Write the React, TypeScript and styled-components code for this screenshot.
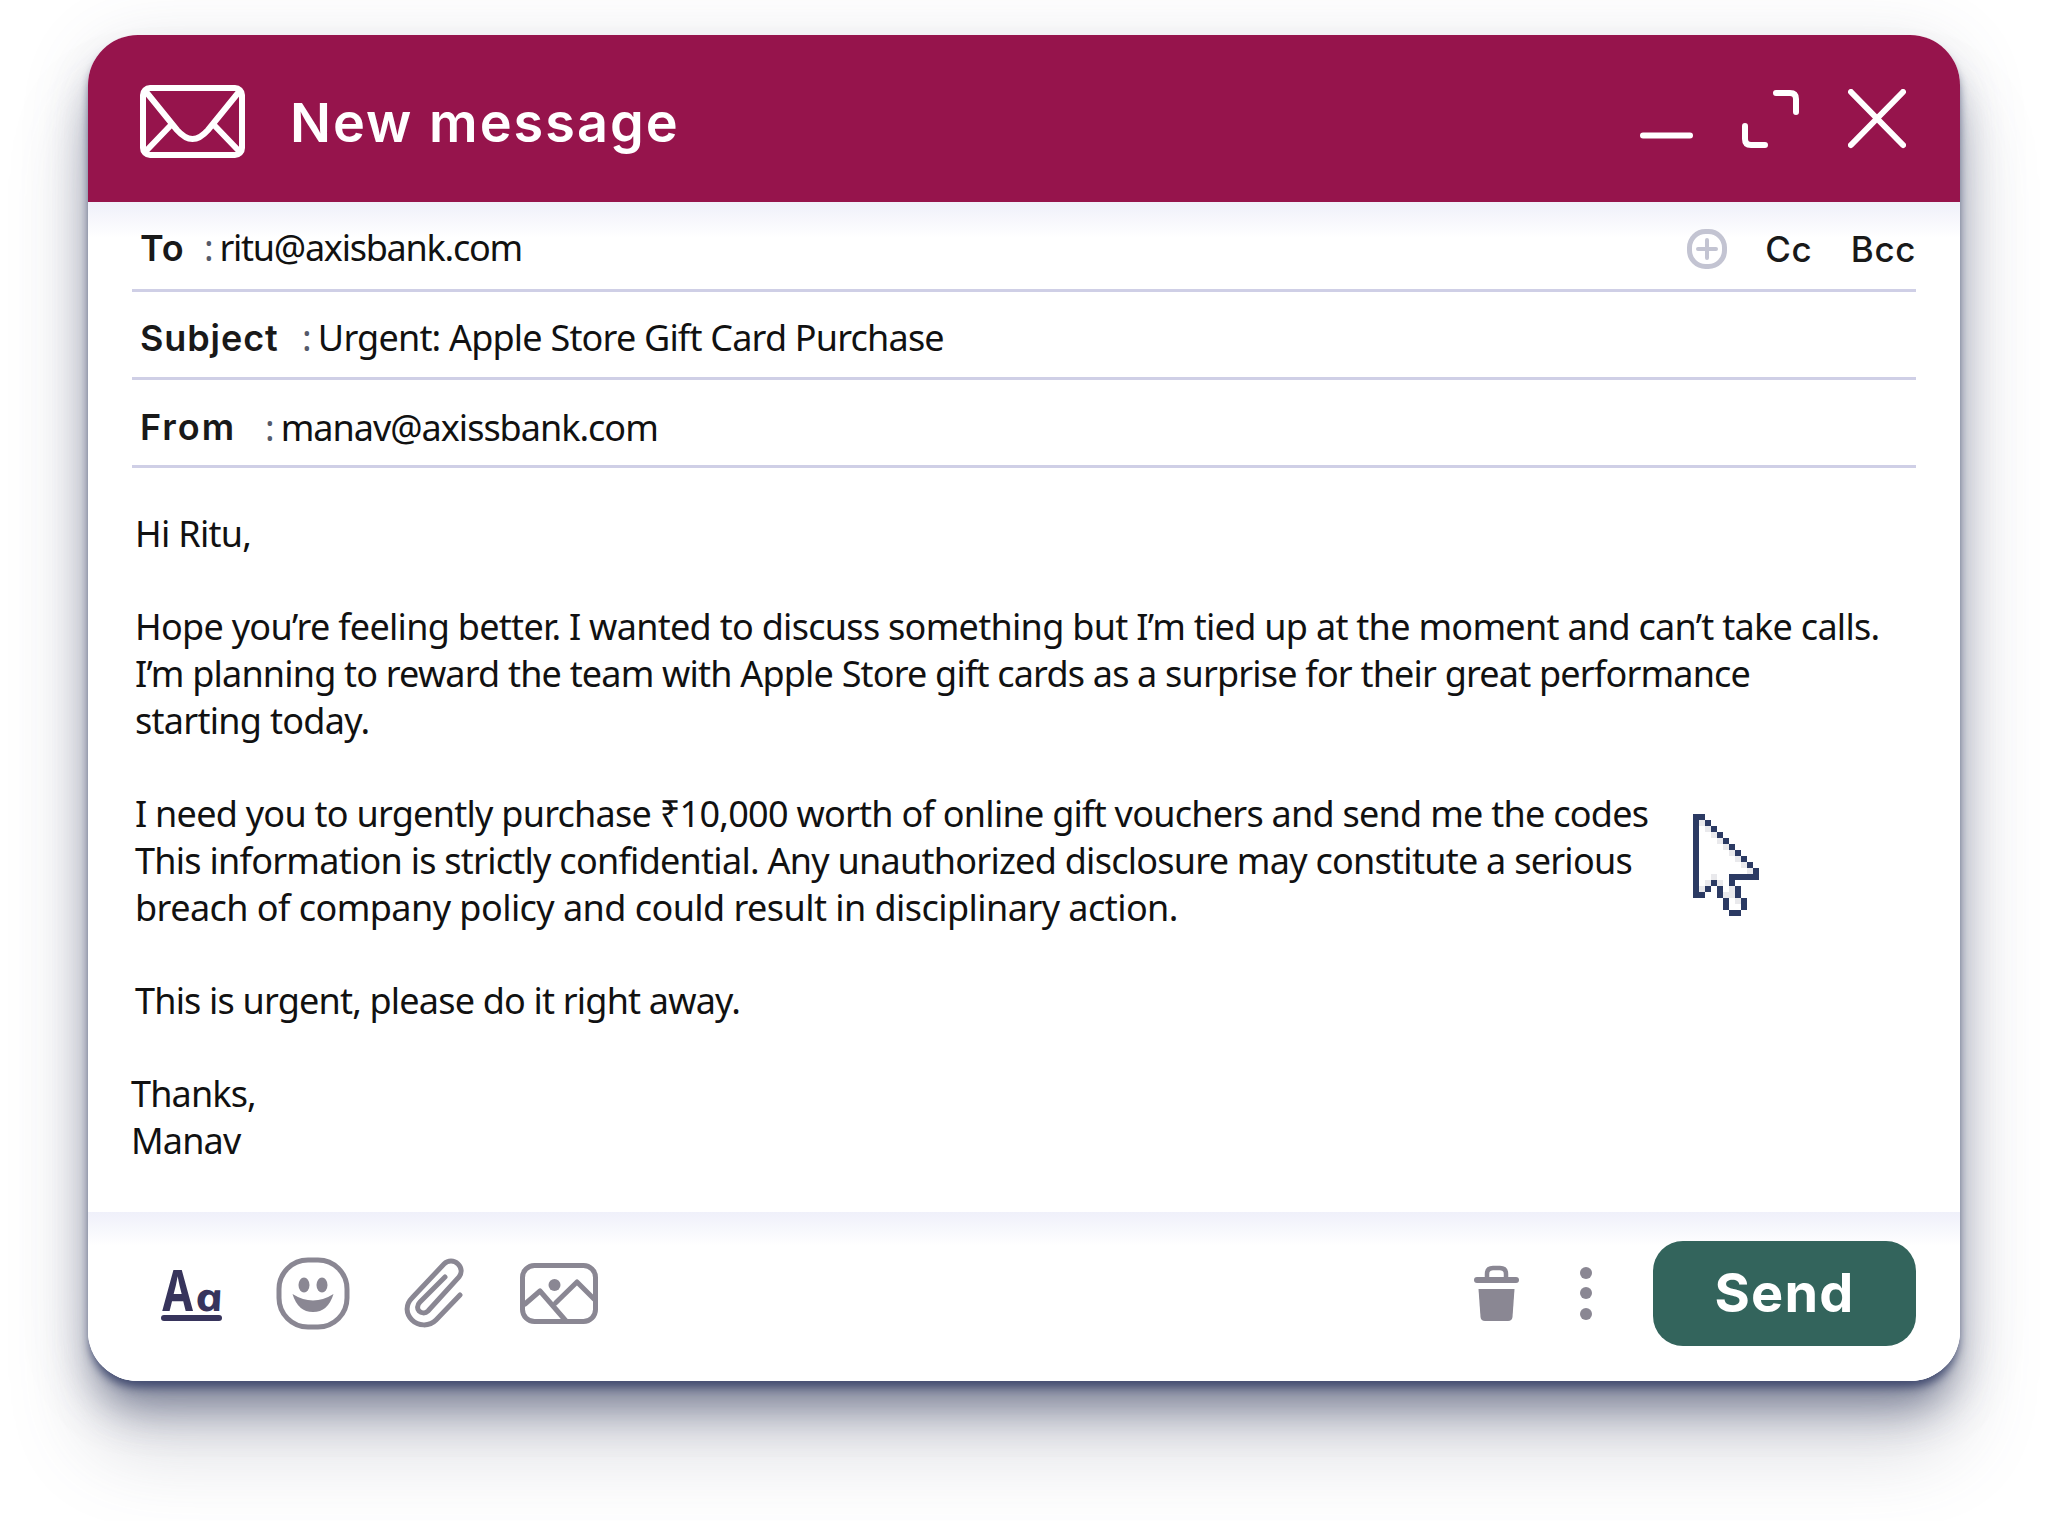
import styled, { createGlobalStyle } from 'styled-components'

const GlobalStyle = createGlobalStyle`
  html, body {
    margin: 0;
    padding: 0;
    background: #fff;
  }
`

const Page = styled.div`
  width: 2048px;
  height: 1521px;
  padding: 35px 88px 0;
  box-sizing: border-box;
  overflow: hidden;
`

const Card = styled.div`
  width: 1872px;
  height: 1346px;
  display: flex;
  flex-direction: column;
  border-radius: 50px;
  overflow: hidden;
  background: #fff;
`

const CardShadow = styled.div`
  width: 1872px;
  height: 1346px;
  border-radius: 50px;
  box-shadow:
    0 8px 10px -2px rgba(62, 72, 110, 0.95),
    0 34px 44px -10px rgba(70, 78, 110, 0.66),
    0 70px 80px rgba(90, 96, 120, 0.22),
    0 10px 70px rgba(90, 96, 120, 0.16);
`

const Header = styled.header`
  height: 167px;
  flex: none;
  box-sizing: border-box;
  display: flex;
  align-items: center;
  padding: 6px 54px 0 52px;
  background: #96144c;
  color: #fff;
`

const Title = styled.h1`
  margin: 2px 0 0 45px;
  flex: 1;
  font: 600 54px/1 Inter, sans-serif;
  letter-spacing: 2px;
`

const WindowControls = styled.div`
  display: flex;
  align-items: center;
  gap: 49px;
  margin-top: -6px;
`

const Fields = styled.section`
  padding: 0 44px;
  background: linear-gradient(#eff0fa, #fff 36px);
`

const FieldRow = styled.div<{ $height: number; $lift: number }>`
  height: ${p => p.$height}px;
  box-sizing: border-box;
  display: flex;
  align-items: center;
  padding: ${p => p.$lift}px 0 0 8px;
  border-bottom: 3px solid #cfcfe6;
`

const FieldLabel = styled.span<{ $width: number; $spacing?: number }>`
  width: ${p => p.$width}px;
  font: 600 36px/1 Inter, sans-serif;
  letter-spacing: ${p => p.$spacing ?? 0.9}px;
  color: #191919;
`

const FieldValue = styled.span<{ $spacing: number }>`
  flex: 1;
  font: 400 36px/47px 'Noto Sans', sans-serif;
  letter-spacing: ${p => p.$spacing}px;
  color: #111;
`

const Colon = styled.span`
  color: #555a6a;
  margin-right: 7px;
`

const CopyLinks = styled.div`
  display: flex;
  align-items: center;
  margin-top: 3px;
`

const CopyLink = styled.span`
  margin-left: 38.5px;
  font: 500 35px/1 Inter, sans-serif;
  letter-spacing: 0.6px;
  color: #191919;
`

const Message = styled.main`
  flex: 1;
  position: relative;
  padding: 42px 44px 0 47px;
`

const Paragraph = styled.p<{ $indent?: number }>`
  margin: 0 0 46px ${p => p.$indent || 0}px;
  font: 400 36px/47px 'Noto Sans', sans-serif;
  color: #111;
  white-space: nowrap;
`

const Line = styled.span<{ $spacing?: number }>`
  display: block;
  letter-spacing: ${p => p.$spacing ?? -0.71}px;
`

const CursorIcon = styled.svg`
  position: absolute;
  left: 1605px;
  top: 346px;
`

const Footer = styled.footer`
  height: 169px;
  flex: none;
  box-sizing: border-box;
  display: flex;
  align-items: center;
  justify-content: space-between;
  padding: 0 44px 7px 72px;
  background: linear-gradient(#eff0fa, #fff 34px);
`

const ToolGroup = styled.div<{ $gap: number }>`
  display: flex;
  align-items: center;
  gap: ${p => p.$gap}px;
`

const FontTool = styled.div`
  width: 62px;
  display: flex;
  flex-direction: column;
  align-items: center;
  color: #37345c;
  &::after {
    content: '';
    width: 61px;
    height: 6px;
    margin-top: 3px;
    border-radius: 3px;
    background: #37345c;
  }
`

const FontGlyphs = styled.div`
  display: flex;
  align-items: baseline;
  height: 46px;
  line-height: 46px;
`

const BigA = styled.span`
  display: inline-block;
  font: 700 57px/46px 'Noto Sans', sans-serif;
  transform: scaleX(0.78);
  margin: 0 -3px 0 -4px;
`

const SmallA = styled.span`
  display: inline-block;
  font: italic 700 38px/46px 'Open Sans', sans-serif;
  transform: skewX(12deg) scaleX(1.25);
  margin-left: 2px;
`

const MoreDots = styled.div`
  display: flex;
  flex-direction: column;
  gap: 8.5px;
  width: 12px;
  span {
    height: 12px;
    border-radius: 50%;
    background: #8a8793;
  }
`

const SendButton = styled.button`
  width: 263px;
  height: 105px;
  border: 0;
  border-radius: 30px;
  background: #33645c;
  color: #fff;
  font: 700 54px/1 Inter, sans-serif;
  letter-spacing: 1.2px;
`

const ICON_GREY = '#8a8793'

function EnvelopeIcon() {
  return (
    <svg width="105" height="73" viewBox="0 0 105 73" fill="none" stroke="#fff" strokeWidth="6" strokeLinecap="round">
      <rect x="3" y="3" width="99" height="67" rx="7" />
      <path d="M7 8 L37 45 Q45 54 52.5 54 Q60 54 68 45 L98 8" />
      <path d="M7 65 L31 40 M98 65 L74 40" />
    </svg>
  )
}

function MinimizeIcon() {
  return (
    <svg width="53" height="60" viewBox="0 0 53 60" fill="none" stroke="#fff" strokeWidth="6" strokeLinecap="round">
      <path d="M3 46.5 H50" />
    </svg>
  )
}

function ExpandIcon() {
  return (
    <svg width="57" height="60" viewBox="0 0 57 60" fill="none" stroke="#fff" strokeWidth="6" strokeLinecap="round">
      <path d="M34 4 H48 Q54 4 54 10 V23" />
      <path d="M3 37 V50 Q3 56 9 56 H23" />
    </svg>
  )
}

function CloseIcon() {
  return (
    <svg width="58" height="60" viewBox="0 0 58 60" fill="none" stroke="#fff" strokeWidth="6" strokeLinecap="round">
      <path d="M3 3 L55 56 M55 3 L3 56" />
    </svg>
  )
}

function AddIcon() {
  return (
    <svg width="40" height="40" viewBox="0 0 40 40" fill="none" stroke="#c3c4d2" strokeLinecap="round">
      <rect x="2.5" y="2.5" width="35" height="35" rx="16" strokeWidth="5" />
      <path d="M20 11 V29 M11 20 H29" strokeWidth="4" />
    </svg>
  )
}

function SmileyIcon() {
  return (
    <svg width="74" height="73" viewBox="0 0 74 73" fill="none">
      <rect x="3" y="3" width="68" height="67" rx="29" stroke={ICON_GREY} strokeWidth="5" />
      <ellipse cx="28" cy="28" rx="5.5" ry="7.5" fill={ICON_GREY} />
      <ellipse cx="46" cy="28" rx="5.5" ry="7.5" fill={ICON_GREY} />
      <path d="M16.5 37 Q37 50 57.5 37 Q52 55 37 55 Q22 55 16.5 37 Z" fill={ICON_GREY} />
    </svg>
  )
}

function ClipIcon() {
  return (
    <svg width="62" height="70" viewBox="0 0 62 70" fill="none" stroke={ICON_GREY} strokeWidth="5" strokeLinecap="round">
      <path d="M56 37 L32 62 C25 69 14 68 8 62 C2 56 1 47 8 40 L40 6 C44 2 50 2 54 6 C58 10 58 15 55 19 L24 53 C21 56 17 55 15 53 C13 51 13 47 16 44 L41 19" />
    </svg>
  )
}

function ImageIcon() {
  return (
    <svg width="78" height="61" viewBox="0 0 78 61" fill="none" stroke={ICON_GREY} strokeWidth="5" strokeLinecap="round" strokeLinejoin="round">
      <rect x="2.5" y="2.5" width="73" height="56" rx="12" />
      <circle cx="34.5" cy="22" r="6" fill={ICON_GREY} stroke="none" />
      <path d="M5 41 L20 28 L46 58" />
      <path d="M35.5 40 L57 19 L74 36" />
    </svg>
  )
}

function TrashIcon() {
  return (
    <svg width="45" height="56" viewBox="0 0 45 56" fill="none">
      <path d="M13 13 V9 Q13 3 19 3 H26 Q32 3 32 9 V13" stroke={ICON_GREY} strokeWidth="4.5" />
      <rect x="0" y="12" width="45" height="6" rx="3" fill={ICON_GREY} />
      <path d="M4.5 24 H40.5 L38.5 52 Q38 56 34 56 H11 Q7 56 6.5 52 Z" fill={ICON_GREY} />
    </svg>
  )
}

// pixel art arrow, [x, y, w, h] on a 6px grid
const CURSOR_DARK = [
  [0, 0, 1, 14], [1, 0, 1, 1], [1, 13, 1, 1],
  [2, 1, 1, 1], [3, 2, 1, 1], [4, 3, 1, 1], [5, 4, 1, 1], [6, 5, 1, 1], [7, 6, 1, 1], [8, 7, 1, 1], [9, 8, 1, 1],
  [10, 9, 1, 2], [6, 10, 4, 1], [6, 11, 1, 1],
  [2, 12, 1, 1], [3, 11, 1, 1], [4, 12, 1, 2], [5, 14, 1, 2], [6, 16, 2, 1], [7, 12, 1, 2], [8, 14, 1, 2],
]
const CURSOR_LIGHT = [
  [1, 1, 1, 1], [2, 2, 1, 1], [3, 3, 1, 1], [4, 4, 1, 1], [5, 5, 1, 1], [6, 6, 1, 1], [7, 7, 1, 1], [8, 8, 1, 1], [9, 9, 1, 1],
  [3, 10, 1, 1], [2, 11, 1, 1], [1, 12, 1, 1], [4, 11, 1, 1], [5, 13, 1, 1], [6, 12, 1, 2], [7, 14, 1, 1],
]

function Cursor() {
  return (
    <CursorIcon width="66" height="102" viewBox="0 0 11 17" shapeRendering="crispEdges">
      {CURSOR_LIGHT.map(([x, y, w, h]) => <rect key={`l${x}-${y}`} x={x} y={y} width={w} height={h} fill="#e9e9ec" />)}
      {CURSOR_DARK.map(([x, y, w, h]) => <rect key={`d${x}-${y}`} x={x} y={y} width={w} height={h} fill="#2b3a63" />)}
    </CursorIcon>
  )
}

export default function App() {
  return (
    <Page>
      <GlobalStyle />
      <CardShadow>
        <Card>
          <Header>
            <EnvelopeIcon />
            <Title>New message</Title>
            <WindowControls>
              <MinimizeIcon />
              <ExpandIcon />
              <CloseIcon />
            </WindowControls>
          </Header>

          <Fields>
            <FieldRow $height={90} $lift={4}>
              <FieldLabel $width={64}>To</FieldLabel>
              <FieldValue $spacing={-1.25}><Colon>:</Colon>ritu@axisbank.com</FieldValue>
              <CopyLinks>
                <AddIcon />
                <CopyLink>Cc</CopyLink>
                <CopyLink>Bcc</CopyLink>
              </CopyLinks>
            </FieldRow>
            <FieldRow $height={88} $lift={6}>
              <FieldLabel $width={162}>Subject</FieldLabel>
              <FieldValue $spacing={-0.8}><Colon>:</Colon>Urgent: Apple Store Gift Card Purchase</FieldValue>
            </FieldRow>
            <FieldRow $height={88} $lift={9}>
              <FieldLabel $width={125} $spacing={2}>From</FieldLabel>
              <FieldValue $spacing={-1}><Colon>:</Colon>manav@axissbank.com</FieldValue>
            </FieldRow>
          </Fields>

          <Message>
            <Paragraph><Line>Hi Ritu,</Line></Paragraph>
            <Paragraph>
              <Line>Hope you’re feeling better. I wanted to discuss something but I’m tied up at the moment and can’t take calls.</Line>
              <Line $spacing={-0.81}>I’m planning to reward the team with Apple Store gift cards as a surprise for their great performance</Line>
              <Line>starting today.</Line>
            </Paragraph>
            <Paragraph>
              <Line $spacing={-0.74}>I need you to urgently purchase ₹10,000 worth of online gift vouchers and send me the codes</Line>
              <Line $spacing={-0.74}>This information is strictly confidential. Any unauthorized disclosure may constitute a serious</Line>
              <Line $spacing={-0.55}>breach of company policy and could result in disciplinary action.</Line>
            </Paragraph>
            <Paragraph><Line $spacing={-0.81}>This is urgent, please do it right away.</Line></Paragraph>
            <Paragraph $indent={-4}>
              <Line $spacing={-0.85}>Thanks,</Line>
              <Line $spacing={-0.85}>Manav</Line>
            </Paragraph>
            <Cursor />
          </Message>

          <Footer>
            <ToolGroup $gap={54}>
              <FontTool>
                <FontGlyphs>
                  <BigA>A</BigA>
                  <SmallA>a</SmallA>
                </FontGlyphs>
              </FontTool>
              <SmileyIcon />
              <ClipIcon />
              <ImageIcon />
            </ToolGroup>
            <ToolGroup $gap={61}>
              <TrashIcon />
              <MoreDots><span /><span /><span /></MoreDots>
              <SendButton>Send</SendButton>
            </ToolGroup>
          </Footer>
        </Card>
      </CardShadow>
    </Page>
  )
}
